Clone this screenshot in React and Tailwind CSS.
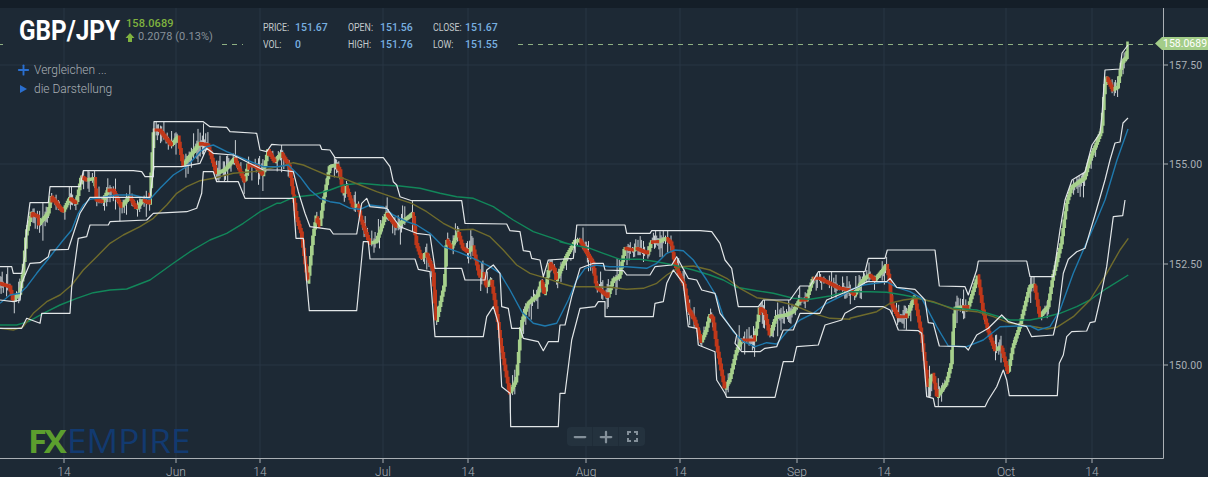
import { Minus, Plus } from "lucide-react";

// traced chart data, written as (zoom crop offset, points at 3x) so it can be read against the crops
const sec = (ox, oy, s) =>
  s.trim().split(/\s+/).map((p) => {
    const [x, y] = p.split(",").map(Number);
    return [ox + x / 3, oy + y / 3];
  });
const real = (s) => sec(0, 0, s).map(([x, y]) => [x * 3, y * 3]);

const pricePts = [
  ...sec(0, 110, "0,520 30,530 40,570 60,550 70,490 80,370 95,310 115,320 118,342 145,310 155,260 190,305 210,265 230,280 245,200 260,210 285,205 290,270 310,275 325,240 340,240 365,290 390,260 410,295 430,270 450,280 462,60 480,60 515,105 535,80 550,165 600,100 625,105 650,190 675,180 705,145 735,215 745,165 770,170 790,195 805,120 825,155 845,130 870,170 890,320"),
  ...sec(280, 110, "65,370 85,520 100,380 110,320 120,350 130,280 150,170 170,165 180,180 190,250 200,230 220,290 235,285 245,330 270,400 290,395 320,310 350,350 400,310 410,400 425,445 440,430 460,480 470,635 495,520 500,390 515,415 535,365 550,415 565,425 580,410 600,500 610,490 620,530 635,510 650,600 665,710 690,850 710,810 725,640 745,580 775,555 785,510 795,555 810,460 825,480 830,510"),
  ...sec(560, 200, "20,170 45,125 60,120 80,155 100,190 110,260 145,290 160,240 180,230 195,145 220,150 230,145 265,160 275,125 295,125 320,115 335,130 345,190 375,260 385,325 405,360 425,425 440,390 450,345 460,355 470,430 495,565 510,540 530,455 545,420 585,420 600,325 615,335 630,405 650,350 680,345 700,335 720,300 740,300 760,235 780,235 810,250 840,265"),
  ...sec(850, 200, "0,270 15,285 30,255 45,235 60,225 75,240 100,210 110,195 120,240 125,310 145,350 170,350 195,290 215,400 235,560 250,520 262,590 290,550 305,490 315,325 340,320 355,325 385,225 400,330 415,390 435,450 455,440 475,520 490,440 510,380 540,260 555,255 570,350 595,320 610,230 635,130"),
  ...real("1067,203 1072,187 1085,178 1090,160 1097,143 1102,130 1105,87 1107,77 1113,90 1118,87 1122,63 1127,57 1128,43"),
];

const upper = [
  ...sec(0, 110, "0,470 35,470 40,490 65,490 75,440 80,355 90,278 145,278 150,230 240,230 250,182 400,182 425,185 435,200 460,200 462,35 610,35 630,50 680,52 690,65 770,70 780,120 800,125 815,103"),
  ...sec(280, 110, "0,105 120,105 125,118 150,120 165,143 310,143 330,170 340,215 350,225 360,260 395,272 545,272 555,340 680,342 690,362 720,365 730,422 750,425 755,445 780,450 790,500 805,450 880,445 890,348"),
  ...sec(560, 200, "50,75 195,75 200,100 270,100 275,92 420,92 455,95 480,130 495,180 515,205 535,320 595,320 610,300 690,300 720,258 750,258 775,215"),
  ...sec(850, 200, "0,215 45,215 55,175 105,175 112,150 255,150 268,258 345,260 355,285 380,210 385,183 530,183 540,230 610,230"),
  ...real("1060,230 1065,200 1072,180 1085,172 1092,145 1100,133 1102,115 1105,70 1120,69 1122,53 1128,45"),
];

const middle = [
  ...sec(0, 110, "0,570 40,575 60,570 65,520 90,460 120,458 145,440 150,420 205,418 240,310 270,262 450,262 462,170 545,170 600,160 620,115 640,130 700,135 740,155 790,180 840,180"),
  ...sec(280, 110, "40,185 55,245 75,310 90,350 150,358 160,372 230,372 245,280 260,265 270,290 320,295 345,330 360,350 410,370 450,375 465,475 545,475 555,510 615,510 620,480 640,465 660,490 665,590 685,595 695,655 720,655 730,685 775,695 790,722 805,695 835,695 840,645"),
  ...sec(560, 200, "15,375 35,290 60,205 100,190 130,190 135,210 190,212 200,225 270,225 285,200 335,195 350,170 385,235 410,240 425,270 465,280 480,340 530,405 525,430 545,455 600,455 615,445 650,440 670,390 700,390 720,340 780,340 800,300 860,275"),
  ...sec(850, 200, "25,260 50,245 110,245 120,235 140,262 195,268 225,300 235,368 250,370 268,438 345,440 355,450 380,405 415,385 455,345 475,365 530,380 545,410 610,405 625,340 640,220 655,178 680,155 705,145"),
  ...real("1095,215 1105,180 1110,160 1115,143 1120,142 1123,123 1128,118"),
];

const lower = [
  ...sec(0, 110, "0,655 65,655 80,625 120,640 125,610 210,610 215,530 235,385 260,380 270,345 325,345 330,335 440,330 460,310 560,305 590,295 605,250 610,185 640,185 650,215 715,215 735,265"),
  ...sec(280, 110, "40,265 48,385 70,385 80,515 88,602 230,602 250,395 265,395 270,447 405,447 415,478 450,485 465,680 610,680 620,620 640,590 655,640 665,830 690,850 692,950 835,950 840,850"),
  ...sec(560, 200, "15,580 35,420 60,325 105,320 115,305 135,305 135,350 280,350 285,310 310,305 320,250 340,210 370,250 385,380 410,385 415,435 465,455 470,540 495,580 500,592 645,592 670,485 700,485 710,440 775,435 795,375 845,360 855,340"),
  ...sec(850, 200, "20,320 100,320 120,330 130,350 145,390 205,392 215,400 230,590 250,595 255,620 405,620 415,600 440,560 460,510 470,540 478,587 622,587 628,490 640,465 650,410 665,395 710,393 720,368 735,365 750,300 770,200 790,50 818,47 825,0"),
];

const blue = [
  ...sec(0, 110, "0,580 30,555 60,550 80,530 110,490 150,440 190,390 215,360 235,310 250,285 270,268 310,262 350,255 400,255 450,268 480,235 520,195 560,170 600,125 620,110 640,105 680,125 740,150 790,170 830,170"),
  ...sec(280, 110, "25,165 60,200 90,240 120,265 150,275 180,280 210,295 240,298 270,285 310,290 340,315 380,335 410,345 450,370 490,410 540,428 580,445 630,470 660,490 690,540 725,605 760,640 795,648 830,640"),
  ...sec(560, 200, "25,300 50,240 75,205 105,195 150,200 200,200 260,205 290,190 320,160 345,150 370,152 400,180 440,240 470,290 490,350 520,395 550,425 585,440 620,428 650,432 680,395 720,360 760,340 800,310 850,285"),
  ...sec(850, 200, "0,270 40,255 110,245 140,262 180,275 215,295 260,380 295,438 350,440 400,420 450,380 510,378 540,378 565,390 600,380 630,330 670,220 700,150 740,60 765,0"),
  ...real("1117,160 1128,129"),
];

const olive = [
  ...sec(0, 110, "0,655 40,660 70,650 100,610 140,575 180,555 215,525 250,480 290,440 330,400 370,375 420,350 460,325 500,285 530,250 560,230 600,212 640,205 700,190 780,183 830,170"),
  ...sec(280, 110, "0,170 40,158 70,165 100,178 140,195 190,205 240,225 290,245 340,262 395,280 440,305 490,340 530,360 580,358 630,380 670,420 710,465 750,490 800,505 850,522"),
  ...sec(560, 200, "40,260 100,260 150,262 200,268 250,265 290,250 320,225 360,200 400,198 450,210 500,235 540,265 590,293 640,300 700,315 760,340 810,355 870,358"),
  ...sec(850, 200, "0,355 40,345 80,335 120,310 160,300 200,295 250,305 310,328 380,335 430,350 480,370 540,378 590,387 620,382 670,350 720,300 770,220 810,150 835,115"),
];

const green = [
  ...sec(0, 110, "0,645 50,645 85,635 130,610 180,585 230,565 280,548 330,540 380,537 450,510 520,460 570,425 630,390 680,370 730,340 780,305 830,280"),
  ...sec(280, 110, "0,280 40,262 100,255 150,240 190,225 240,220 300,225 360,228 420,235 480,250 530,260 580,265 640,290 700,330 760,365 820,385 860,400"),
  ...sec(560, 200, "0,125 40,135 90,145 130,160 180,178 240,178 290,185 340,195 400,210 450,225 490,240 530,262 590,272 640,280 700,295 750,298 810,288 860,275"),
  ...sec(850, 200, "0,275 60,275 110,277 160,285 210,295 260,310 310,325 380,330 430,345 480,360 540,360 590,350 630,340 680,320 720,300 770,265 835,225"),
];

const toLine = (pts) => pts.map(([x, y]) => `${x.toFixed(1)},${y.toFixed(1)}`).join(" ");

let seed = 7;
const rnd = () => {
  seed = (seed * 16807) % 2147483647;
  return seed / 2147483647;
};

const at = (pts, x) => {
  for (let i = 0; i < pts.length - 1; i++) {
    const [x1, y1] = pts[i];
    const [x2, y2] = pts[i + 1];
    if (x >= x1 && x <= x2) {
      const t = x2 === x1 ? 0 : (x - x1) / (x2 - x1);
      return { y: y1 + (y2 - y1) * t, up: y2 < y1, slope: Math.abs((y2 - y1) / (x2 - x1 || 1)) };
    }
  }
  return { y: pts[pts.length - 1][1], up: true, slope: 0 };
};

// one thin candle per step, coloured by the direction of the traced path.
// wicks stay inside the channel, like the real highs and lows do
let upBars = "";
let downBars = "";
let wicks = "";
for (let x = 0; x < 1128; x += 1.1) {
  const { y, up, slope } = at(pricePts, x);
  const a = at(pricePts, Math.max(0, x - 0.9)).y;
  const b = at(pricePts, x + 0.9).y;
  const top = Math.min(a, b) - 1.5;
  const bot = Math.max(a, b) + 1.5;
  const bar = `M${x.toFixed(1)} ${top.toFixed(1)}V${bot.toFixed(1)}`;
  if (up) upBars += bar;
  else downBars += bar;
  if (rnd() < 0.72) {
    const k = slope > 3 ? 0.35 : 1;
    const t = Math.max(y - (2 + rnd() * rnd() * 20) * k, at(upper, x).y);
    const d = Math.min(y + (2 + rnd() * rnd() * 20) * k, at(lower, x).y);
    if (d > t) wicks += `M${x.toFixed(1)} ${t.toFixed(1)}V${d.toFixed(1)}`;
  }
}

const vGrid = [64, 176, 260, 383, 468, 586, 680, 797, 884, 1006, 1092];
const xTicks = [
  [64, "14"], [176, "Jun"], [260, "14"], [383, "Jul"], [468, "14"], [586, "Aug"],
  [680, "14"], [797, "Sep"], [884, "14"], [1006, "Oct"], [1092, "14"],
];
const yTicks = [[65, "157.50"], [164, "155.00"], [264, "152.50"], [365, "150.00"]];

const Chart = () => (
  <svg width="1208" height="469" viewBox="0 8 1208 469" className="block">
    <g stroke="#293744" strokeWidth="1">
      {vGrid.map((x) => (
        <line key={x} x1={x} x2={x} y1="8" y2="458" />
      ))}
      {yTicks.map(([y]) => (
        <line key={y} x1="0" x2="1163" y1={y} y2={y} />
      ))}
    </g>
    <g stroke="#8fb082" strokeWidth="1" strokeDasharray="5 5">
      <line x1="0" x2="3" y1="44.5" y2="44.5" />
      <line x1="222" x2="243" y1="44.5" y2="44.5" />
      <line x1="518" x2="1155" y1="44.5" y2="44.5" />
    </g>
    <path d={wicks} stroke="#dfe4e6" strokeWidth="0.9" fill="none" />
    <path d={upBars} stroke="#a6d08c" strokeWidth="2.6" fill="none" />
    <path d={downBars} stroke="#c0381a" strokeWidth="2.8" fill="none" />
    <g fill="none" strokeLinejoin="round" strokeWidth="1.4">
      <polyline points={toLine(green)} stroke="#12875a" />
      <polyline points={toLine(olive)} stroke="#6f6b2c" />
      <polyline points={toLine(blue)} stroke="#1f79ad" />
      <polyline points={toLine(upper)} stroke="#e2e6e8" strokeWidth="1.2" />
      <polyline points={toLine(middle)} stroke="#e2e6e8" strokeWidth="1.2" />
      <polyline points={toLine(lower)} stroke="#e2e6e8" strokeWidth="1.2" />
    </g>
    <path d="M0 458.5H1163.5V8" stroke="#aab0b5" strokeWidth="1" fill="none" />
    <g stroke="#aab0b5" strokeWidth="1">
      {xTicks.map(([x]) => (
        <line key={x} x1={x} x2={x} y1="458" y2="463" />
      ))}
      {yTicks.map(([y]) => (
        <line key={y} x1="1164" x2="1168" y1={y} y2={y} />
      ))}
    </g>
    <g fill="#aab0b5" fontSize="12" fontFamily="Roboto, sans-serif" fontWeight="300">
      {xTicks.map(([x, t]) => (
        <text key={x} x={x} y="476" textAnchor="middle">{t}</text>
      ))}
      {yTicks.map(([y, t]) => (
        <text key={y} x="1169" y={y + 4} fontSize="10.5" fontWeight="400" letterSpacing="0.2">{t}</text>
      ))}
    </g>
  </svg>
);

const Stat = ({ label, value }) => (
  <div className="flex">
    <span className="w-8 text-[10px] text-[#c4c9cc] [transform:scaleX(0.88)] origin-left">{label}</span>
    <span className="text-[10.5px] font-medium text-[#78b0e0]">{value}</span>
  </div>
);

export default function App() {
  return (
    <div className="relative w-[1208px] h-[477px] overflow-hidden bg-[#1d2935] font-['Roboto',sans-serif]">
      <div className="h-2 bg-[#141e28]" />
      <Chart />

      {/* header overlay */}
      <div className="absolute left-0 top-[16px] flex items-start">
        <div className="ml-[19px] text-[27px] leading-[31px] font-bold text-white [transform:scaleX(0.9)] origin-left w-[107px] whitespace-nowrap">
          GBP/JPY
        </div>
        <div className="mt-px">
          <div className="text-[11px] leading-[13px] font-medium text-[#7fb23f] tracking-[0.1px]">158.0689</div>
          <div className="flex items-center text-[11px] leading-[14px] text-[#87919a] tracking-[0.1px]">
            <svg width="10" height="9" viewBox="0 0 10 9" className="mr-[3px] ml-[-1px]">
              <path d="M5 0 9.5 5H7v4H3V5H.5z" fill="#7fb23f" />
            </svg>
            0.2078 (0.13%)
          </div>
        </div>
        <div className="ml-[50px] mt-[5px] grid grid-cols-[85px_85px_85px] gap-y-[4px] leading-[13px]">
          <Stat label="PRICE:" value="151.67" />
          <Stat label="OPEN:" value="151.56" />
          <Stat label="CLOSE:" value="151.67" />
          <Stat label="VOL:" value="0" />
          <Stat label="HIGH:" value="151.76" />
          <Stat label="LOW:" value="151.55" />
        </div>
      </div>

      <div className="absolute left-[18px] top-[62px] flex flex-col gap-[3px] text-xs font-light leading-4 text-[#aab0b5]">
        <div className="flex items-center">
          <Plus size={17} strokeWidth={2.8} className="-mx-[3px] mr-[2px] h-4 text-[#2a6fd0]" />
          Vergleichen ...
        </div>
        <div className="flex items-center">
          <span className="ml-[2px] mr-[7px] w-0 h-0 border-y-[4px] border-y-transparent border-l-[7px] border-l-[#2a6fd0]" />
          die Darstellung
        </div>
      </div>

      {/* last price tag */}
      <div className="absolute left-[1155px] top-[37px] w-[53px] h-[13px] pl-[8px] bg-[#a3cd89] text-[10.5px] leading-[13px] text-white [clip-path:polygon(7px_0,100%_0,100%_100%,7px_100%,0_50%)]">
        158.0689
      </div>

      {/* logo */}
      <div className="absolute left-[28px] top-[425px] flex items-center text-[32px] leading-[31px] font-['Open_Sans',sans-serif]">
        <span className="font-bold text-[#5c9e2e] tracking-[-3px] [transform:scaleX(1.08)] origin-left">FX</span>
        <span className="ml-[6px] font-medium text-[#123a70] [transform:scaleX(1.1)] origin-left">EMPIRE</span>
      </div>

      {/* zoom controls */}
      <div className="absolute left-[567px] top-[427px] flex h-[19px] w-[78px] rounded-sm bg-[#24323e] text-[#84909a]">
        <div className="flex w-[26px] items-center justify-center border-r border-[#1f2c38]">
          <Minus size={18} strokeWidth={3} />
        </div>
        <div className="flex w-[26px] items-center justify-center border-r border-[#1f2c38]">
          <Plus size={18} strokeWidth={3} />
        </div>
        <div className="flex w-[26px] items-center justify-center">
          <svg width="11" height="11" viewBox="0 0 11 11" fill="none" stroke="currentColor" strokeWidth="2">
            <path d="M1 4V1h3M7 1h3v3M10 7v3H7M4 10H1V7" />
          </svg>
        </div>
      </div>
    </div>
  );
}
